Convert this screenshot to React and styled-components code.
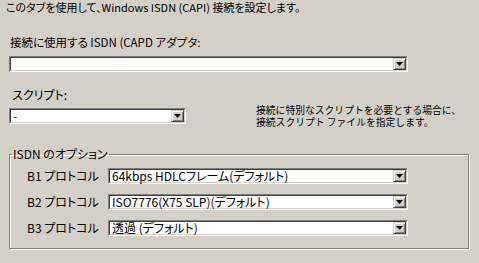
import React from "react";
import styled, { createGlobalStyle } from "styled-components";

const Global = createGlobalStyle`
  html, body { margin: 0; padding: 0; background: #d4d0c8; }
  body {
    font-family: "Noto Sans CJK JP", "Noto Sans", sans-serif;
    font-feature-settings: "palt";
    color: #000;
  }
`;

const Page = styled.div`
  width: 479px;
  height: 263px;
  background: #d4d0c8;
  position: relative;
  overflow: hidden;
`;

const Intro = styled.div`
  font-size: 11px;
  line-height: 14px;
  margin-left: 6px;
  white-space: nowrap;
`;

const Label = styled.div`
  font-size: ${(p) => p.$size || 12}px;
  line-height: 14px;
  margin-left: ${(p) => p.$left || 10}px;
  margin-top: ${(p) => p.$top || 0}px;
  white-space: nowrap;
`;

const Combo = styled.div`
  box-sizing: border-box;
  width: ${(p) => p.$width}px;
  height: 16px;
  margin-left: ${(p) => p.$left || 0}px;
  margin-top: ${(p) => p.$top || 0}px;
  border-top: 1px solid #808080;
  border-left: 1px solid #808080;
  border-right: 1px solid #ffffff;
  border-bottom: 1px solid #ffffff;
  display: flex;
  flex: none;
`;

const ComboInner = styled.div`
  flex: 1;
  display: flex;
  align-items: center;
  border-top: 1px solid #404040;
  border-left: 1px solid #404040;
  border-right: 1px solid #d4d0c8;
  border-bottom: 1px solid #d4d0c8;
  background: #fff;
  min-width: 0;
`;

const ComboText = styled.div`
  flex: 1;
  font-size: 12px;
  line-height: 12px;
  padding-left: 2px;
  white-space: nowrap;
`;

const DropButton = styled.div`
  box-sizing: border-box;
  width: 13px;
  height: 12px;
  background: #d4d0c8;
  border-top: 1px solid #d4d0c8;
  border-left: 1px solid #d4d0c8;
  border-right: 1px solid #404040;
  border-bottom: 1px solid #404040;
  box-shadow: inset 1px 1px 0 #ffffff, inset -1px -1px 0 #808080;
  display: flex;
  align-items: center;
  justify-content: center;
`;

const Arrow = () => (
  <svg width="7" height="4" viewBox="0 0 7 4">
    <path d="M0 0h7L3.5 4z" fill="#000" />
  </svg>
);

const ComboBox = ({ width, left, top, value }) => (
  <Combo $width={width} $left={left} $top={top}>
    <ComboInner>
      <ComboText>{value}</ComboText>
      <DropButton>
        <Arrow />
      </DropButton>
    </ComboInner>
  </Combo>
);

const ScriptRow = styled.div`
  display: flex;
  align-items: flex-start;
  margin-top: 16px;
`;

const ScriptCol = styled.div`
  display: flex;
  flex-direction: column;
`;

const Hint = styled.div`
  font-size: 9.8px;
  line-height: 12px;
  font-feature-settings: normal;
  margin-left: 70px;
  margin-top: 16px;
  white-space: nowrap;
`;

const Group = styled.fieldset`
  box-sizing: border-box;
  margin: 19px 0 0 9px;
  width: 460px;
  padding: 7px 0 12px 17px;
  border: 1px solid #808080;
  box-shadow: inset 1px 1px 0 #ffffff, 1px 1px 0 #ffffff;
  display: flex;
  flex-direction: column;
  gap: 10px;
`;

const Legend = styled.legend`
  font-size: 12px;
  line-height: 14px;
  padding: 0 1px;
  margin-left: -15px;
`;

const ProtoRow = styled.div`
  display: flex;
  align-items: center;
`;

const ProtoLabel = styled.div`
  width: 81px;
  font-size: 12px;
  line-height: 16px;
  white-space: nowrap;
`;

export default function App() {
  return (
    <Page>
      <Global />
      <Intro>このタブを使用して、Windows ISDN (CAPI) 接続を設定します。</Intro>
      <Label $top={21} $size={11.5}>接続に使用する ISDN (CAPD アダプタ:</Label>
      <ComboBox width={399} left={9} top={7} value="" />
      <ScriptRow>
        <ScriptCol>
          <Label $left={12}>スクリプト:</Label>
          <ComboBox width={177} left={9} top={6} value="-" />
        </ScriptCol>
        <Hint>
          接続に特別なスクリプトを必要とする場合に、
          <br />
          接続スクリプト ファイルを指定します。
        </Hint>
      </ScriptRow>
      <Group>
        <Legend>ISDN のオプション</Legend>
        <ProtoRow>
          <ProtoLabel>B1 プロトコル</ProtoLabel>
          <ComboBox width={300} value="64kbps HDLCフレーム(デフォルト)" />
        </ProtoRow>
        <ProtoRow>
          <ProtoLabel>B2 プロトコル</ProtoLabel>
          <ComboBox width={300} value="ISO7776(X75 SLP)(デフォルト)" />
        </ProtoRow>
        <ProtoRow>
          <ProtoLabel>B3 プロトコル</ProtoLabel>
          <ComboBox width={300} value="透過 (デフォルト)" />
        </ProtoRow>
      </Group>
    </Page>
  );
}
